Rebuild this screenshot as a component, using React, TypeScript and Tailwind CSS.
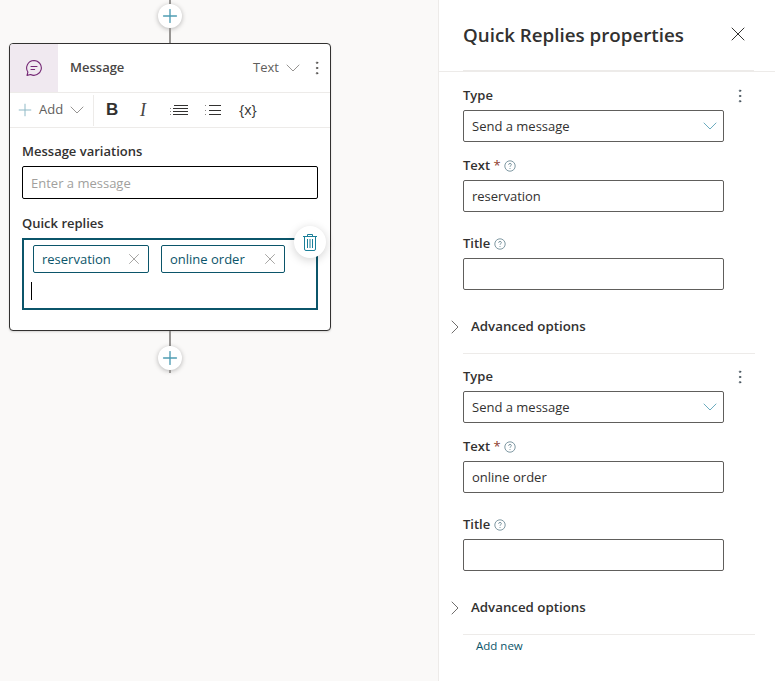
import * as React from 'react'
import { ChevronDown, ChevronRight, MoreVertical, Plus, X } from 'lucide-react'

const font = { fontFamily: '"Open Sans", "Noto Sans", sans-serif' }

function HelpIcon() {
  return (
    <svg width="12" height="12" viewBox="0 0 12 12" fill="none" className="shrink-0">
      <circle cx="6" cy="6" r="5.2" stroke="#5f7f8c" strokeWidth="0.8" />
      <path d="M4.6 4.8C4.6 3.9 5.2 3.4 6 3.4s1.4.5 1.4 1.2c0 1-1.4 1.1-1.4 2.2" stroke="#5f7f8c" strokeWidth="0.8" />
      <circle cx="6" cy="8.6" r="0.5" fill="#5f7f8c" />
    </svg>
  )
}

function AddNode() {
  return (
    <div className="w-6 h-6 rounded-full bg-white shadow-[0_1px_5px_rgba(0,0,0,0.28)] flex items-center justify-center">
      <Plus size={22} strokeWidth={1.5} className="text-[#4f9db3]" />
    </div>
  )
}

function Line({ h }: { h: string }) {
  return <div className={`w-[2px] bg-[#979593] ${h}`} />
}

function Chip({ label, width }: { label: string; width: string }) {
  return (
    <div className={`h-7 ${width} border border-[#0b556a] rounded-[2px] flex items-center justify-between pl-2 pr-[5px] text-[#0b556a] text-[13px]`}>
      <span className="pt-[2px]">{label}</span>
      <X size={18} strokeWidth={1} className="text-[#8a8886]" />
    </div>
  )
}

function Field({ label, required, value, mt }: { label: string; required?: boolean; value: string; mt: string }) {
  return (
    <div className={mt}>
      <div className={`flex items-center h-5 pt-[2px] text-[13px] font-semibold text-[#323130] ${required ? 'gap-[3px]' : 'gap-1'}`}>
        <span>
          {label}
          {required && <span className="font-normal text-[#8e3b2c]"> *</span>}
        </span>
        <HelpIcon />
      </div>
      <div className="mt-[5px] w-[261px] h-8 pt-[2px] border border-[#605e5c] rounded-[2px] flex items-center px-2 text-[13px] text-[#323130]">{value}</div>
    </div>
  )
}

function ReplySection({ text, first }: { text: string; first?: boolean }) {
  return (
    <div className={first ? 'pt-[13px]' : 'pt-3 border-t border-[#edebe9]'}>
      <div className="flex items-center justify-between h-5 pt-[2px]">
        <span className="text-[13px] font-semibold text-[#323130]">Type</span>
        <MoreVertical size={18} strokeWidth={1.2} className="text-[#3b4a54] mr-[6px]" />
      </div>
      <div className="mt-[5px] w-[261px] h-8 pt-[2px] border border-[#605e5c] rounded-[2px] flex items-center justify-between pl-2 pr-px text-[13px] text-[#323130]">
        <span>Send a message</span>
        <ChevronDown size={24} strokeWidth={0.9} className="text-[#5ba3b8] -mt-[2px]" />
      </div>
      <Field label="Text" required value={text} mt="mt-[13px]" />
      <Field label="Title" value="" mt="mt-[21px]" />
      <div className="relative flex items-center h-5 pt-[2px] mt-[26px] mb-[17px] pl-2 text-[13.3px] font-semibold text-[#323130]">
        <ChevronRight size={24} strokeWidth={0.9} className="absolute -left-5 text-[#605e5c]" />
        Advanced options
      </div>
    </div>
  )
}

export default function App() {
  return (
    <div className="w-[775px] h-[681px] flex overflow-hidden bg-white" style={font}>
      <div className="w-[438px] shrink-0 bg-[#faf9f8] flex flex-col">
        <div className="w-[322px] ml-[9px] flex flex-col items-center">
          <Line h="h-1" />
          <AddNode />
          <Line h="h-[15px]" />
          <div className="w-[322px] h-[288px] bg-white border border-[#323130] rounded-[4px] overflow-visible shadow-[0_1px_2px_rgba(0,0,0,0.15)]">
            <div className="flex h-[49px] border-b border-[#edebe9]">
              <div className="w-[48px] bg-[#f0e9f0] rounded-tl-[3px] flex items-center justify-center">
                <svg width="18" height="18" viewBox="0 0 18 18" fill="none" stroke="#742774" strokeWidth="1.1">
                  <path d="M9 1.5a7.4 7.4 0 1 1-3.4 14L2 16.4l.9-3.4A7.4 7.4 0 0 1 9 1.5Z" strokeLinejoin="round" />
                  <path d="M6 7.5h6M6 10.5h3.6" strokeLinecap="round" />
                </svg>
              </div>
              <div className="flex-1 flex items-center pl-3 pr-1">
                <span className="text-[13px] font-semibold text-[#484644]">Message</span>
                <span className="ml-auto text-[13px] text-[#605e5c]">Text</span>
                <ChevronDown size={24} strokeWidth={0.9} className="ml-[2px] text-[#8a8886]" />
                <MoreVertical size={18} strokeWidth={1.2} className="ml-[3px] text-[#484644]" />
              </div>
            </div>
            <div className="flex items-center h-[35px] border-b border-[#edebe9]">
              <div className="flex items-center w-[84px] h-[31px] pl-[5px] border-r border-[#edebe9]">
                <Plus size={20} strokeWidth={1.2} className="text-[#8fb9c6]" />
                <span className="ml-1 text-[13px] text-[#605e5c]">Add</span>
                <ChevronDown size={24} strokeWidth={0.9} className="ml-[2px] text-[#8a8886]" />
              </div>
              <span className="ml-[12px] w-[12px] text-[17px] font-bold text-[#323130]" style={{ fontFamily: '"Liberation Sans", sans-serif' }}>B</span>
              <span className="ml-[22px] w-[10px] text-[18px] italic text-[#484644]" style={{ fontFamily: '"Liberation Serif", serif' }}>I</span>
              <svg width="18" height="11" viewBox="0 0 18 11" className="ml-[20px]" stroke="#323130" strokeWidth="1">
                <path d="M4 .5h14M3 3.5h15M3 6.5h15M3 9.5h15" />
                <path d="M0 3.5h2M0 6.5h2M0 9.5h2" stroke="#8a8886" strokeDasharray="1 1" />
              </svg>
              <svg width="16" height="11" viewBox="0 0 16 11" className="ml-[17px]" stroke="#323130" strokeWidth="1">
                <path d="M4 .5h12M4 5.5h12M4 9.5h12" />
                <path d="M0 .5h2M0 5.5h2M0 9.5h2" stroke="#8a8886" strokeDasharray="1 1" />
              </svg>
              <span className="ml-[18px] -mt-[2px] text-[14px] text-[#323130]">{'{x}'}</span>
            </div>
            <div className="px-3 pt-[13px]">
              <div className="h-5 pt-[2px] flex items-center text-[13px] font-semibold text-[#323130]">Message variations</div>
              <div className="mt-[5px] h-[33px] pt-[2px] border border-black rounded-[2px] flex items-center px-2 text-[13px] text-[#a19f9d]">Enter a message</div>
              <div className="mt-[15px] h-5 text-[13px] font-semibold text-[#323130]">Quick replies</div>
              <div className="relative mt-1 h-[72px] border-2 border-[#0b556a] px-[9px] pt-[5px]">
                <div className="flex gap-3">
                  <Chip label="reservation" width="w-[116px]" />
                  <Chip label="online order" width="w-[124px]" />
                </div>
                <div className="w-px h-[18px] bg-black mt-[9px] -ml-[2px]" />
                <div className="absolute -top-[14px] -right-[10px] w-8 h-8 rounded-full bg-white shadow-[0_2px_10px_rgba(0,0,0,0.18)] flex items-center justify-center">
                  <svg width="14" height="17" viewBox="0 0 14 17" fill="none" stroke="#1a7f99" strokeWidth="1">
                    <path d="M0 2.5h14M4.5 2.5V.5h5v2M1.5 2.5v12.5a1.5 1.5 0 0 0 1.5 1.5h8a1.5 1.5 0 0 0 1.5-1.5V2.5" />
                    <path d="M4.5 5v9M7 5v9M9.5 5v9" />
                  </svg>
                </div>
              </div>
            </div>
          </div>
          <Line h="h-[15px]" />
          <AddNode />
          <Line h="h-[3px]" />
        </div>
      </div>
      <div className="flex-1 border-l border-[#edebe9] flex flex-col">
        <div className="h-[72px] shrink-0 border-b border-[#edebe9] flex items-start justify-between pl-6 pr-[25px] pt-5 relative">
          <h1 className="text-[18.75px] leading-[30px] font-semibold text-[#323130]">Quick Replies properties</h1>
          <X size={24} strokeWidth={1} className="text-[#323130] mt-[2px]" />
          <div className="absolute left-6 -bottom-px w-[291px] h-[2px] bg-[#edebe9]" />
        </div>
        <div className="pl-6 w-[316px]">
          <ReplySection text="reservation" first />
          <ReplySection text="online order" />
          <div className="border-t border-[#edebe9] pl-[13px] pt-px text-[11.5px] leading-5 text-[#0b556a]">Add new</div>
        </div>
      </div>
    </div>
  )
}
